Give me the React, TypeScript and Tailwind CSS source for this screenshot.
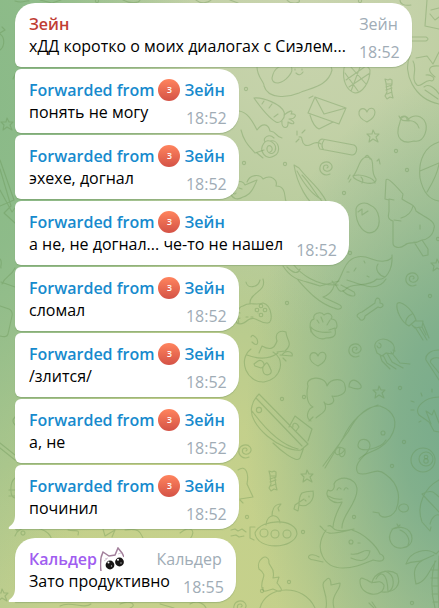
import React from "react";

type Message = {
  text: string;
  time: string;
  author?: string;
  authorClass?: string;
  sticker?: boolean;
};

const groups: Message[][] = [
  [
    { author: "Зейн", authorClass: "text-[#c03d33]", text: "хДД коротко о моих диалогах с Сиэлем...", time: "18:52" },
    { text: "понять не могу", time: "18:52" },
    { text: "эхехе, догнал", time: "18:52" },
    { text: "а не, не догнал... че-то не нашел", time: "18:52" },
    { text: "сломал", time: "18:52" },
    { text: "/злится/", time: "18:52" },
    { text: "а, не", time: "18:52" },
    { text: "починил", time: "18:52" },
  ],
  [{ author: "Кальдер", authorClass: "text-[#a05df0]", sticker: true, text: "Зато продуктивно", time: "18:55" }],
];

const star = "M0 -6l2 4 4 0-3 3 2 5-5-3-4 3 1-5-3-3 5 0z";
const heart = "M0 7C-5 5-9 1-8-3C-7-7-2-8 0-3C2-8 7-8 8-3C8 2 4 5 0 7z";
const spiral = "M4 6C-2 9-7 4-6-1C-5-6 2-8 5-4C8 0 4 4 0 3C-4 2-3-3 0-3C2-3 3-1 1 0";
const candy = "M-3-6l-1-4 3 1 2-1 2 1 0 4-1 2 1 8 1 4-3-1-3 2-2-3 2-4zM-3-5h6M-3-2l6-2M-3 1l6-2M-2 5l5-2";

const marks: [string, number, number][] = [
  [heart, 367, 115],
  [star, 373, 136],
  [star, 437, 265],
  [star, 7, 124],
  [star, 379, 392],
  [star, 307, 476],
  [star, 2, 595],
  [heart, 318, 359],
  [spiral, 326, 168],
  [spiral, 412, 279],
  [spiral, 355, 350],
  [spiral, 245, 451],
  [spiral, 240, 607],
  [candy, 389, 89],
  [candy, 273, 481],
];

const dots: [number, number][] = [
  [246, 89], [244, 163], [285, 164], [396, 151], [407, 170], [344, 193], [350, 253], [438, 239],
  [287, 303], [430, 296], [282, 399], [304, 397], [400, 388], [404, 442], [392, 466], [354, 517],
  [247, 517], [303, 532], [289, 582], [262, 591], [412, 603], [360, 1], [97, 1],
];

const doodles = [
  // fried egg and pineapple
  "M257 67C257 77 265 83 264 86C268 99 287 98 299 93C309 88 328 87 332 70L331 66",
  "M272 78C274 67 281 64 291 66C295 72 285 82 278 83C273 83 272 81 272 78M296 73q4 4 7-1M295 69v1M302 69v1",
  "M344 68C345 62 368 63 370 70C370 83 362 93 355 93C347 91 342 81 344 68M346 80L366 66M349 87L370 73M350 66L366 84M345 73L358 91M361 65C357 74 354 84 351 91",
  // carrot and letters
  "M254 98C263 97 281 104 284 112C286 118 280 124 276 122C269 118 261 108 254 98M264 101l-2 3M272 104l-3 4M274 117l4-3M284 115C289 111 294 109 291 114C298 113 296 119 289 119C297 122 294 126 288 122C289 130 281 129 282 121",
  "M315 97L346 108L339 124L308 113zM315 97L324 114L346 108M310 115C312 122 314 127 319 129L333 122M309 98l4-2",
  // leaf, rose and sheep
  "M239 111C247 112 252 120 257 130C262 123 268 123 270 131C278 132 275 137 282 138M241 130C244 142 249 146 255 153L264 150",
  "M270 141C279 139 282 153 274 156C266 161 258 151 264 143C268 137 278 144 275 151C272 157 264 151 268 146C272 144 274 151 270 152M257 153L263 158M265 142C262 138 269 133 274 138",
  "M231 194C232 182 242 178 245 185L257 180C254 187 251 195 243 197C237 201 232 198 231 194M247 182C250 174 260 174 263 179C271 174 278 180 276 186C287 186 284 198 286 201M239 188l3 1M233 193q2 2 3 0",
  // firecracker, bell and banana
  "M322 139L354 145C359 148 356 155 352 155L320 149C317 145 318 140 322 139M324 140C320 146 323 149 324 150M321 144C314 139 310 148 305 145C300 142 304 136 299 137M297 135v-4M302 133l3-3M299 139l-3 3",
  "M353 176C358 172 359 157 367 157C377 158 369 171 376 179C377 188 353 181 353 176M353 176C360 173 374 178 375 183M361 177q3 3 1 6M365 157q3-4 5 2M377 161l2-2 1 5M350 175l-2 4M351 179l-2 3",
  "M294 165L299 168C309 181 324 192 328 206L317 207C308 203 297 184 294 165M297 171C304 184 313 195 321 199M302 175C312 185 317 198 325 204",
  // peach and pine
  "M400 122C393 141 405 144 414 141C425 143 429 127 424 120C419 114 411 115 407 121C408 115 401 115 400 122M400 118C404 114 408 117 409 120C403 122 400 119 399 116M408 121C413 120 418 123 419 128",
  "M386 180C387 178 390 179 403 194L402 199C409 204 415 204 416 211C422 216 437 221 434 228C433 237 425 240 422 240C414 245 409 241 405 245C400 249 393 248 393 243L393 221C386 219 389 214 389 211V200L385 199zM389 199l5 1M401 218C408 216 412 211 413 206M394 220l7 1M414 242L423 256L428 255L428 249L422 240M420 225v4",
  // cracked egg, ball
  "M356 209C358 202 366 202 370 205C380 209 382 225 375 231C366 237 355 226 356 209M358 212l4-3 0 6 6-4",
  "M439 142C425 146 418 160 420 178C423 192 430 200 439 201M420 171L439 163M439 164C437 176 430 187 427 192",
  // fox tail
  "M335 284C342 282 342 260 357 257C367 254 375 263 384 261C390 261 393 257 392 255C393 271 385 281 377 279C368 288 350 282 345 290C338 294 338 287 335 284M378 264C374 270 380 276 385 277M356 268l-2 3M364 261l1 2M367 276l2 1M347 272h2",
  "M283 266C293 282 304 280 320 286L339 281M287 267C294 274 298 274 300 269M293 264C300 273 315 286 338 285M297 279C307 290 318 303 334 308C340 311 345 307 338 304L323 297C332 294 337 284 332 281M341 285L354 292C358 298 349 297 343 291M347 280C364 286 378 292 386 279",
  // globe, bag, pipe
  "M410 56C402 72 414 99 439 104M413 61C418 69 410 79 417 85C422 88 425 78 432 81C437 79 431 74 426 75M416 58L427 56L433 64L439 52M439 66C429 65 426 70 435 77M424 87C430 82 437 91 439 94M425 90L438 99",
  "M427 0L425 26L439 29M431 10L439 8M430 14L435 20L439 17M411 37L426 37Q430 39 426 41H411M400 0C400 4 404 6 411 5",
  // bone and clenched hand
  "M362 312C358 313 355 316 359 318C361 322 365 320 365 316L378 307C382 309 386 304 380 303C381 297 375 296 375 303L362 312",
  "M311 332C309 325 310 320 314 319C312 313 321 311 324 315C329 311 334 316 331 319C338 319 338 328 335 329C337 337 332 338 326 338C320 341 310 335 311 327C314 332 324 333 331 332M321 317L323 322M330 320L327 325M335 328L329 330M317 320l2 3",
  // squid and jellyfish
  "M397 304C399 299 412 308 416 320L409 326C401 322 396 310 397 304M412 314C407 316 405 321 406 324M416 321L423 321L422 327L415 328L412 325M423 323L429 338M419 327L427 340M415 327L423 340M422 327L426 335",
  "M376 350C371 342 382 335 391 342C395 345 395 350 393 354L386 353L382 356L377 353zM377 346C379 351 384 345 379 343M380 355L382 361L390 369M383 355L387 363L396 369M387 353L392 362L403 368M391 352L400 363L410 364M393 350L395 351",
  // controller and fishbowl
  "M239 324C237 316 237 307 243 306C250 301 255 306 263 303C272 305 274 324 267 323C259 323 255 315 248 320C242 325 237 325 236 321M250 303C250 292 267 292 263 279M246 282C247 289 258 288 260 280M240 313a3 3 0 1 0 0 5M258 313v0M246 317h2M251 317h2",
  "M251 349C237 360 247 383 264 382C283 378 285 358 273 352M247 355C260 360 271 358 278 353M254 364L258 361C263 358 267 367 261 368L255 366zM263 367C261 378 273 376 271 370C267 361 267 361 263 367M259 353L262 346C269 350 274 350 277 341C274 332 281 330 286 332C286 340 294 343 285 351L277 352M252 342C256 346 259 345 257 339C253 334 252 335 251 337M280 355L292 356C294 352 286 349 282 355M283 358l3 3",
  // boat, smoke
  "M259 394L308 444L301 450C283 453 246 425 252 406C253 401 256 397 259 394M256 398L302 446M252 411C263 426 280 445 298 449M289 427L295 416L312 429L308 441M293 427C292 423 296 421 299 427L296 431M273 443C280 450 297 464 300 458L304 447M309 421L313 417M311 421C304 417 309 408 313 407C305 403 307 390 308 386C304 377 325 374 327 386C331 377 345 378 345 386C348 395 336 397 332 396C338 404 326 407 324 402C330 413 317 415 316 418",
  "M349 387C349 381 353 378 358 382C365 388 360 391 350 387",
  // fishing rod and bulb
  "M323 466L348 432C357 415 367 405 380 406C394 411 400 422 390 438C379 453 366 451 359 459M325 468L343 438C351 421 362 410 378 405M345 449C342 455 335 457 335 451C337 445 346 447 345 453C344 459 337 458 340 448",
  "M439 397C424 397 414 408 419 415L429 422L434 431L439 432M431 424L426 411L432 415L434 410L439 423M422 396l-1-3M411 401l3 1M411 410h3M419 422l2-1M432 389v3",
  "M439 350C429 350 425 356 426 360L439 380M439 358C433 357 429 360 431 363L439 373",
  // yo-yo string and pool ball
  "M386 440C381 449 357 454 358 445C359 437 369 438 370 445C371 454 351 462 358 473C366 478 376 466 385 474C401 485 400 500 396 510C390 520 379 518 379 513L373 512M404 504a5 4 0 1 0 3 7a4 4 0 0 0-3-7",
  "M435 460a12 12 0 1 1-24 0a12 12 0 0 1 24 0M433 459a7 7 0 1 1-14 0a7 7 0 0 1 14 0",
  // fish and submarine
  "M302 493C309 490 314 492 313 491C315 501 307 508 299 505L298 511L294 509L295 505L304 499M302 493C299 496 299 501 299 505M309 496v1M305 500l1 1",
  "M297 534C297 518 261 518 255 533C257 551 294 549 297 534M255 527L250 527V538L254 540M266 525C267 513 279 513 280 523M272 516C272 509 275 504 281 504L278 508L279 511M268 533a4 4 0 1 1-8 0a4 4 0 0 1 8 0M279 534a4 4 0 1 1-8 0a4 4 0 0 1 8 0M291 534a4 4 0 1 1-8 0a4 4 0 0 1 8 0M231 530l4-1 3 2 4-2 4 3M231 536l5-1 3 2 5-1",
  // sea serpent
  "M333 527C334 515 341 505 342 502C333 505 324 497 328 490C333 493 335 487 334 484C337 475 357 476 357 490C357 504 341 516 342 528M337 490q2-4 4-1M344 490q2-4 4-1M328 496q7 4 14 3M320 526C327 531 321 537 350 530M328 526C334 523 328 535 354 529M326 530C313 549 324 568 343 568C355 568 363 564 373 560C387 564 385 555 380 554C376 545 363 533 352 530M319 557C309 551 304 559 314 560L323 562M351 554C362 556 362 548 370 551C367 565 356 560 351 558M353 542a2 2 0 1 1-4 0a2 2 0 0 1 4 0M360 543h-2",
  // peach, umbrella, pumpkin
  "M392 530C386 539 392 549 402 548C416 547 414 530 404 528C397 526 393 528 392 530M392 529l5-1 3-3M397 524l2 4M400 530C406 532 411 539 408 545",
  "M439 480C424 488 416 506 422 522L430 531L431 527M422 494L439 512M422 494C431 489 434 492 439 497M430 524C432 516 437 514 439 515",
  "M360 580C359 598 385 598 384 585C378 577 375 587 367 580C362 578 361 577 360 580M372 583C374 572 389 568 397 574C402 585 395 593 382 592M376 579C380 571 387 571 388 591M385 571C397 575 394 589 388 592",
  // palm and coral
  "M406 564C410 551 427 547 436 554L439 551M406 564C414 560 418 563 423 560C412 566 414 576 416 584C426 583 431 567 436 561M423 560L434 555M435 561C431 576 431 593 435 608M439 556C438 570 438 590 439 608M431 570h8M431 578h8M432 586h8M432 594h8M433 602h7",
  "M262 588C260 578 269 576 259 569C256 560 267 552 269 561C267 566 276 566 273 578L279 577L277 583C285 592 281 593 273 589L266 591C260 592 265 586 262 588M260 608C266 585 304 583 315 608M326 608C329 593 318 585 326 580C330 575 331 582 331 585L340 583C341 590 330 595 334 608M369 603l5 5M372 602l4 6",
  // penguin and pieces along the left edge
  "M238 470C246 464 249 474 247 484L253 497L240 499M240 500l3 3",
  "M0 33L5 30L2 27M0 34C5 37 5 46 0 50M13 79L16 72M0 160L14 200L0 206M0 169L11 206L4 213M0 190L12 212L15 208M4 213L15 223M0 259C3 262 0 266 1 268M2 284C5 276 11 277 15 268M1 282L15 287",
  "M0 306L9 309Q13 311 12 316L8 334Q7 338 0 336M15 417C12 420 13 423 15 425M0 443L15 455M0 448L15 460M15 478C9 483 10 498 15 498M9 490h6M9 496h6",
  "M15 536C18 526 33 525 45 531C54 537 51 542 50 543M17 530v1M25 533a2 2 0 1 0 0 .1M68 530C75 532 80 528 78 535M103 529L105 536L115 530L112 537M125 530C141 527 141 535 143 538M180 533C190 525 197 530 190 539M60 606C70 600 84 610 91 604M120 604C132 599 137 606 130 608M160 604L174 608M190 604C198 599 205 605 206 608",
  "M15 1C23 4 26 0 29 1M40 0L52 3L61 0M123 0C130 4 139 3 140 0M196 0C202 5 209 2 211 0M230 0L238 3M287 0C291 5 302 3 299 0",
];

function Wallpaper() {
  return (
    <div
      aria-hidden="true"
      className="absolute inset-0 -z-10 overflow-hidden bg-[#aec791] bg-[radial-gradient(ellipse_50%_58%_at_106%_70%,#76aa8b_0%,#76aa8bd0_30%,#76aa8b60_65%,#76aa8b00_100%),radial-gradient(ellipse_50%_80%_at_-5%_18%,#8aba88_0%,#8aba88e6_30%,#8aba8800_100%),radial-gradient(ellipse_70%_55%_at_70%_0%,#c9d4ae_0%,#c9d4aecc_35%,#c9d4ae00_100%),radial-gradient(ellipse_65%_60%_at_42%_95%,#c6d18b_0%,#c6d18be6_45%,#c6d18b00_100%)]"
    >
      <svg className="h-full w-full" viewBox="0 0 439 608" preserveAspectRatio="xMidYMid slice">
        <g fill="none" stroke="#648f4e" strokeOpacity="0.34" strokeWidth="1.1" strokeLinecap="round" strokeLinejoin="round">
          {doodles.map((d) => (
            <path key={d} d={d} />
          ))}
          {marks.map(([d, x, y]) => (
            <path key={`${x}-${y}`} d={d} transform={`translate(${x} ${y})`} />
          ))}
          {dots.map(([x, y], i) => (
            <circle key={i} cx={x} cy={y} r="1.6" />
          ))}
          <circle cx="257" cy="310" r="1.8" />
          <circle cx="261" cy="306" r="1.8" />
          <circle cx="265" cy="310" r="1.8" />
          <circle cx="261" cy="315" r="1.8" />
          <circle cx="259" cy="410" r="2.6" />
          <circle cx="383" cy="433" r="2" />
          <circle cx="426" cy="457" r="1.8" />
          <circle cx="426" cy="461" r="2.2" />
        </g>
      </svg>
    </div>
  );
}

function CatSticker() {
  return (
    <svg className="h-6 w-6 shrink-0" viewBox="0 0 24 24" aria-hidden="true">
      <path d="M1 24C0 17 1 9 3 5L9 9L15 8L18 1L22 6L24 10" fill="none" stroke="#a27f9b" strokeWidth="1.5" />
      <path d="M5 12l3-1M4 14l3-2M18 7l3-1" stroke="#cdbaca" strokeWidth="0.8" />
      <circle cx="10" cy="18" r="4.4" fill="#171515" />
      <circle cx="19.5" cy="15" r="4.4" fill="#171515" />
      <circle cx="8.5" cy="15.5" r="1" fill="#fff" />
      <circle cx="11.5" cy="19" r="0.7" fill="#bbb" />
      <circle cx="18" cy="12.8" r="1" fill="#fff" />
      <circle cx="21" cy="16" r="0.7" fill="#bbb" />
    </svg>
  );
}

function Bubble({ message, first, last }: { message: Message; first: boolean; last: boolean }) {
  const top = first ? "rounded-tl-[20px]" : "rounded-tl-md";
  const bottom = last ? "rounded-bl-none" : "rounded-bl-md";
  return (
    <article className={`relative w-fit max-w-full rounded-r-[20px] bg-white pt-[10px] pr-3 pb-1 pl-[14px] shadow-[0_1px_1px_#6b8f5a66] ${top} ${bottom}`}>
      {message.author ? (
        <header className="flex h-[22px] items-center pr-[2px]">
          <span className={`font-semibold ${message.authorClass}`}>{message.author}</span>
          {message.sticker && <span className="ml-[3px] flex"><CatSticker /></span>}
          <span className="ml-auto pl-4 text-[#a0acb6]">{message.author}</span>
        </header>
      ) : (
        <header className="flex h-[22px] items-center gap-1 pr-[2px] font-semibold text-[#168acd]">
          <span>Forwarded from</span>
          <span className="flex size-[22px] items-center justify-center rounded-full bg-linear-to-b from-[#ff845e] to-[#d45246] text-[8px] text-white">
            З
          </span>
          <span>Зейн</span>
        </header>
      )}
      <div className="flex min-h-7 justify-between gap-[13px]">
        <p className="text-black">{message.text}</p>
        <time className="self-end text-[#a0acb6]">{message.time}</time>
      </div>
      {last && (
        <svg className="absolute bottom-0 -left-[7px] h-[14px] w-[7px]" viewBox="0 0 7 14" aria-hidden="true">
          <path d="M7 0C7 6 5 9 1 12Q0 14 2 14H7z" fill="#fff" />
        </svg>
      )}
    </article>
  );
}

export default function App() {
  return (
    <main className="relative isolate flex min-h-screen flex-col gap-[9px] px-[15px] pt-[3px] pb-[6px] font-['Open_Sans','Noto_Sans',sans-serif] text-[16px] leading-[22px]">
      <Wallpaper />
      {groups.map((group, g) => (
        <section key={g} className="flex flex-col gap-[2px]">
          {group.map((message, i) => (
            <Bubble key={message.text} message={message} first={i === 0} last={i === group.length - 1} />
          ))}
        </section>
      ))}
    </main>
  );
}
